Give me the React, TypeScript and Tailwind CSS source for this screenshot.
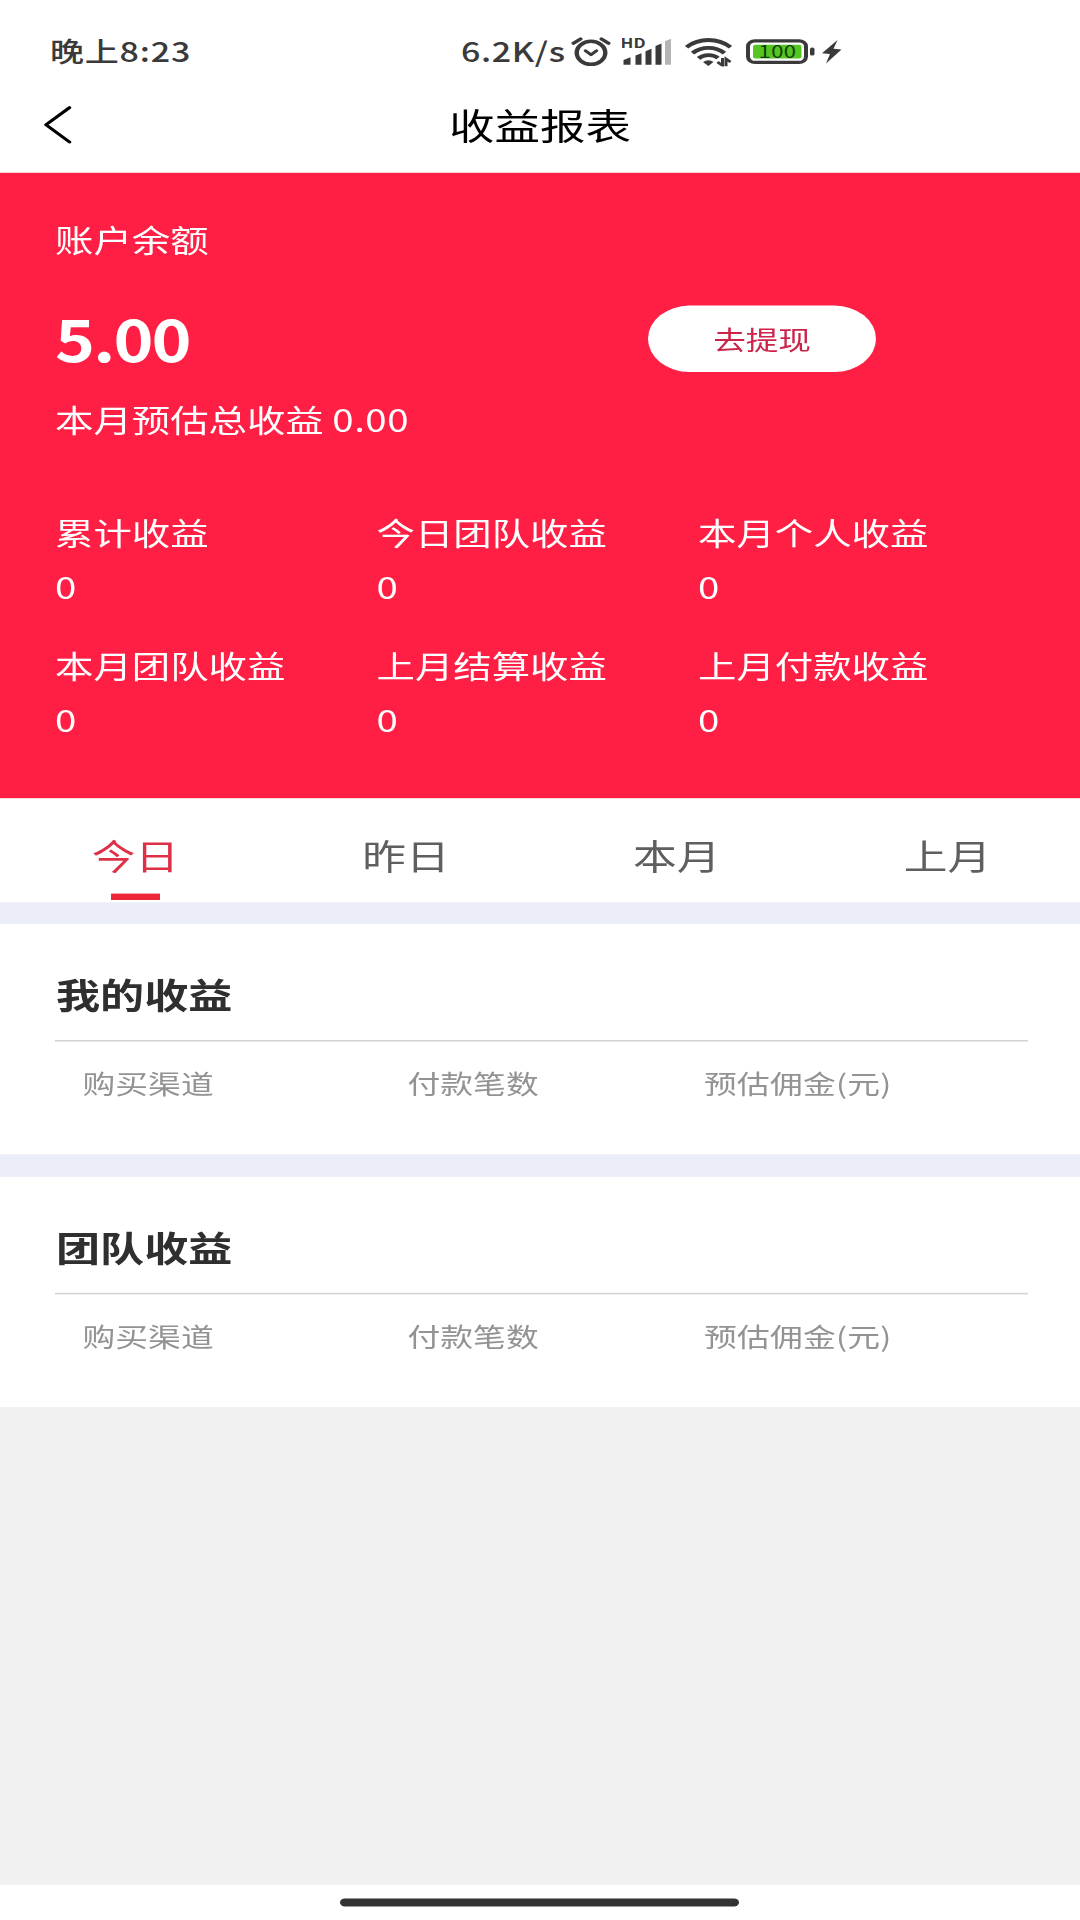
const stats = [
  { label: '累计收益', value: '0' },
  { label: '今日团队收益', value: '0' },
  { label: '本月个人收益', value: '0' },
  { label: '本月团队收益', value: '0' },
  { label: '上月结算收益', value: '0' },
  { label: '上月付款收益', value: '0' },
];

const tabs = ['今日', '昨日', '本月', '上月'];

function AlarmIcon() {
  return (
    <svg width="40" height="38" viewBox="0 0 40 38" fill="none" stroke="#3a3a3a" strokeLinecap="round">
      <circle cx="20" cy="21" r="14.3" strokeWidth="4.4" />
      <path d="M14.500 18.500l5.500 5 5.500-5" strokeWidth="3.6" strokeLinejoin="round" />
      <path d="M2.500 9L9.500 3.800M37.500 9L30.500 3.800" strokeWidth="4" />
    </svg>
  );
}

function SignalIcon() {
  return (
    <svg width="50" height="44" viewBox="0 -6 50 44" fill="#3a3a3a">
      <path d="M1.500 31l7-3.500V37h-7z" />
      <path d="M13.500 25.500l6-3V37h-6z" />
      <path d="M23.500 20l6-3v20h-6z" />
      <path d="M33.500 13.500l6-3V37h-6z" />
      <path d="M43 7.500l6-3V37h-6z" fill="#b4b4b4" />
      <text x="-1.500" y="15.500" fontSize="16.500" fontWeight="600" textLength="25" lengthAdjust="spacingAndGlyphs">HD</text>
    </svg>
  );
}

function WifiIcon() {
  return (
    <svg width="47" height="36" viewBox="0 0 47 36" fill="none" stroke="#3a3a3a">
      <path d="M1.500 12C14 0 33 0 45.500 12" strokeWidth="4.800" />
      <path d="M7.500 19.500C16.500 10.500 30.500 10.500 39.500 19.500" strokeWidth="4.800" />
      <path d="M13.500 26C19 20.500 28 20.500 33 25.500" strokeWidth="4.800" />
      <path d="M18 30.500q5.500-4.500 10.500 0L23.300 35.500z" fill="#3a3a3a" stroke="none" />
      <path d="M37.500 25.500V35l-5-4.500M41 36V26.500l4.500 4" strokeWidth="3" />
    </svg>
  );
}

function BatteryIcon() {
  return (
    <svg width="69" height="36" viewBox="0 -4 69 36" fill="none">
      <rect x="2" y="2" width="58" height="27" rx="7" stroke="#3a3a3a" strokeWidth="4" />
      <rect x="7" y="7" width="48.500" height="17" rx="2.500" fill="#55c522" />
      <rect x="64" y="10.500" width="4.500" height="10" rx="2" fill="#3a3a3a" />
      <text x="12.500" y="23.800" fontSize="22" fontWeight="400" textLength="37.500" fill="#123f08">100</text>
    </svg>
  );
}

function StatusBar() {
  return (
    <div className="flex h-[104px] items-start pt-[39px] pl-[50px] text-[#3a3a3a]">
      <span className="w-[411px] text-[34px] leading-[50px] font-medium tracking-[0.8px]">晚上8:23</span>
      <span className="w-[110px] text-[34px] leading-[50px] font-medium tracking-[0.6px]">6.2K/s</span>
      <div className="flex items-start pt-[6px]">
        <AlarmIcon />
        <div className="mt-[-7px] ml-[11px]">
          <SignalIcon />
        </div>
        <div className="mt-[2px] ml-[13px]">
          <WifiIcon />
        </div>
        <div className="ml-[14px]">
          <BatteryIcon />
        </div>
        <svg className="mt-[5px] ml-[7px]" width="20" height="30" viewBox="0 0 20 30" fill="#3a3a3a">
          <path d="M15.500 0L0 16.500l8 1L4 29.500 19.500 12l-8-1z" />
        </svg>
      </div>
    </div>
  );
}

function EarningsSection({ title }: { title: string }) {
  return (
    <section className="h-[287.5px] bg-white px-[55px]">
      <h2 className="flex h-[145px] items-center pt-[30px] pl-px text-[44.1px] leading-none font-bold text-[#2f2f2f]">{title}</h2>
      <div className="mr-[-3px] h-[1.5px] bg-[#d4d4d4]" />
      <div className="flex pt-[28px] text-[32.8px] leading-[48px] text-[#939393]">
        <span className="w-[325px] pl-[27.5px]">购买渠道</span>
        <span className="w-[296.5px] pl-[27.5px]">付款笔数</span>
        <span className="pl-[27.5px] tracking-[0.2px]">预估佣金(元)</span>
      </div>
    </section>
  );
}

export default function App() {
  return (
    <div className="h-[1920px] w-[1080px] overflow-hidden bg-white">
      {/* laid out on a 1080x2400 phone screen, squeezed to the 9:16 frame */}
      <div className="flex h-[2400px] w-[1080px] origin-top scale-y-[0.8] flex-col bg-[#f1f1f1] font-['Noto_Sans_CJK_SC',sans-serif]">
        <header className="h-[216px] shrink-0 bg-white">
          <StatusBar />
          <div className="grid h-[104px] grid-cols-[120px_1fr_120px] items-center">
            <button className="pl-[43px]">
              <svg width="29" height="48" viewBox="0 0 29 48" fill="none" stroke="#000" strokeWidth="3.6" strokeLinecap="round" strokeLinejoin="round">
                <path d="M26.500 2.500L3 24l23.500 21.500" />
              </svg>
            </button>
            <h1 className="text-center text-[45.5px] leading-none text-black">收益报表</h1>
          </div>
        </header>

        <section className="h-[782px] shrink-0 bg-[#ff1f44] px-[55px] pt-[53.5px] text-[38.4px] leading-[56px] text-white">
          <div>账户余额</div>
          <div className="mt-[54px] flex h-[88px] items-center">
            <div className="w-[593px]">
              <span className="inline-block origin-left scale-x-[0.93] text-[73px] leading-none font-bold tracking-[-2px]">5.00</span>
            </div>
            <button className="h-[83px] w-[228px] rounded-full bg-white text-[32.6px] leading-none text-[#cb2349]">去提现</button>
          </div>
          <div className="mt-[27px]">
            本月预估总收益 <span className="tracking-[0.5px]">0.00</span>
          </div>
          <div className="mt-[85px] grid grid-cols-[321.5px_321.5px_1fr] gap-y-[41.5px]">
            {stats.map((s) => (
              <div key={s.label} className="h-[125px] w-[300px]">
                <div>{s.label}</div>
                <div className="mt-[12px]">{s.value}</div>
              </div>
            ))}
          </div>
        </section>

        <nav className="grid h-[130px] shrink-0 grid-cols-[repeat(4,270.7px)] bg-white">
          {tabs.map((t, i) => (
            <button key={t} className="flex flex-col items-center pt-[39px]">
              <span className={i === 0 ? 'text-[43.7px] leading-[62px] text-[#dc3146]' : 'text-[43.7px] leading-[62px] text-[#5f5f5f]'}>{t}</span>
              {i === 0 && <span className="mt-[18px] h-[7.5px] w-[49px] bg-[#ee2738]" />}
            </button>
          ))}
        </nav>

        <div className="h-[27px] shrink-0 bg-[#ebeef8]" />
        <EarningsSection title="我的收益" />
        <div className="h-[28.5px] shrink-0 bg-[#ebeef8]" />
        <EarningsSection title="团队收益" />

        <footer className="mt-auto flex h-[44px] shrink-0 justify-center bg-white pt-[16.5px] pr-[2px]">
          <div className="h-[10px] w-[399px] rounded-full bg-[#333]" />
        </footer>
      </div>
    </div>
  );
}
